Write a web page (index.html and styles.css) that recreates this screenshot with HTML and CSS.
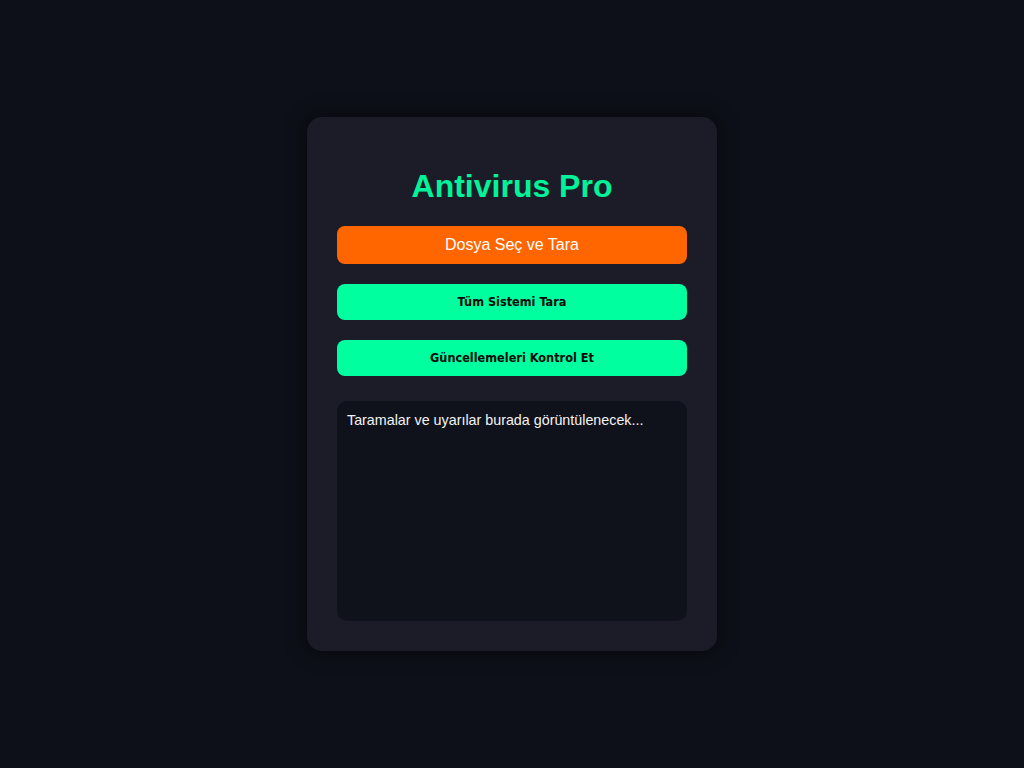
FILE: index.html
```html
<!DOCTYPE html>
<html lang="tr">
<head>
<meta charset="utf-8">
<title>Antivirus Pro</title>
<link rel="stylesheet" href="styles.css">
</head>
<body>
<div class="card">
  <h1 class="title">Antivirus Pro</h1>
  <button class="btn btn-file">Dosya Seç ve Tara</button>
  <button class="btn btn-green">Tüm Sistemi Tara</button>
  <button class="btn btn-green">Güncellemeleri Kontrol Et</button>
  <div class="log">Taramalar ve uyarılar burada görüntülenecek...</div>
</div>
</body>
</html>
```
FILE: styles.css
```css
html, body {
  margin: 0;
  padding: 0;
}
body {
  background: #0e1019;
  min-height: 100vh;
  display: flex;
  align-items: center;
  justify-content: center;
  font-family: "Liberation Sans", Arial, sans-serif;
  color: #ffffff;
}
.card {
  width: 350px;
  padding: 30px;
  background: #1b1c28;
  border-radius: 15px;
  box-shadow: 0 0 20px rgba(0, 0, 0, 0.6);
  display: flex;
  flex-direction: column;
}
.title {
  margin: 21px 0 21px;
  font-size: 32px;
  line-height: 37px;
  font-weight: bold;
  color: #00f29a;
  text-align: center;
}
.btn {
  border: none;
  border-radius: 8px;
  width: 100%;
  cursor: pointer;
}
.btn-file {
  background: #ff6600;
  color: #ffffff;
  font-family: "Liberation Sans", Arial, sans-serif;
  font-size: 16px;
  line-height: 18px;
  padding: 10px;
  margin-bottom: 20px;
}
.btn-green {
  background: #00ff9f;
  color: #0a0a0a;
  font-family: "DejaVu Sans", sans-serif;
  font-stretch: condensed;
  font-weight: bold;
  font-size: 12.6px;
  line-height: 16px;
  padding: 10px;
  margin-bottom: 20px;
}
.log {
  margin-top: 5px;
  height: 200px;
  padding: 10px;
  background: #10121b;
  border-radius: 10px;
  font-size: 14.3px;
  line-height: 18px;
  color: #f4f4f4;
}
```
